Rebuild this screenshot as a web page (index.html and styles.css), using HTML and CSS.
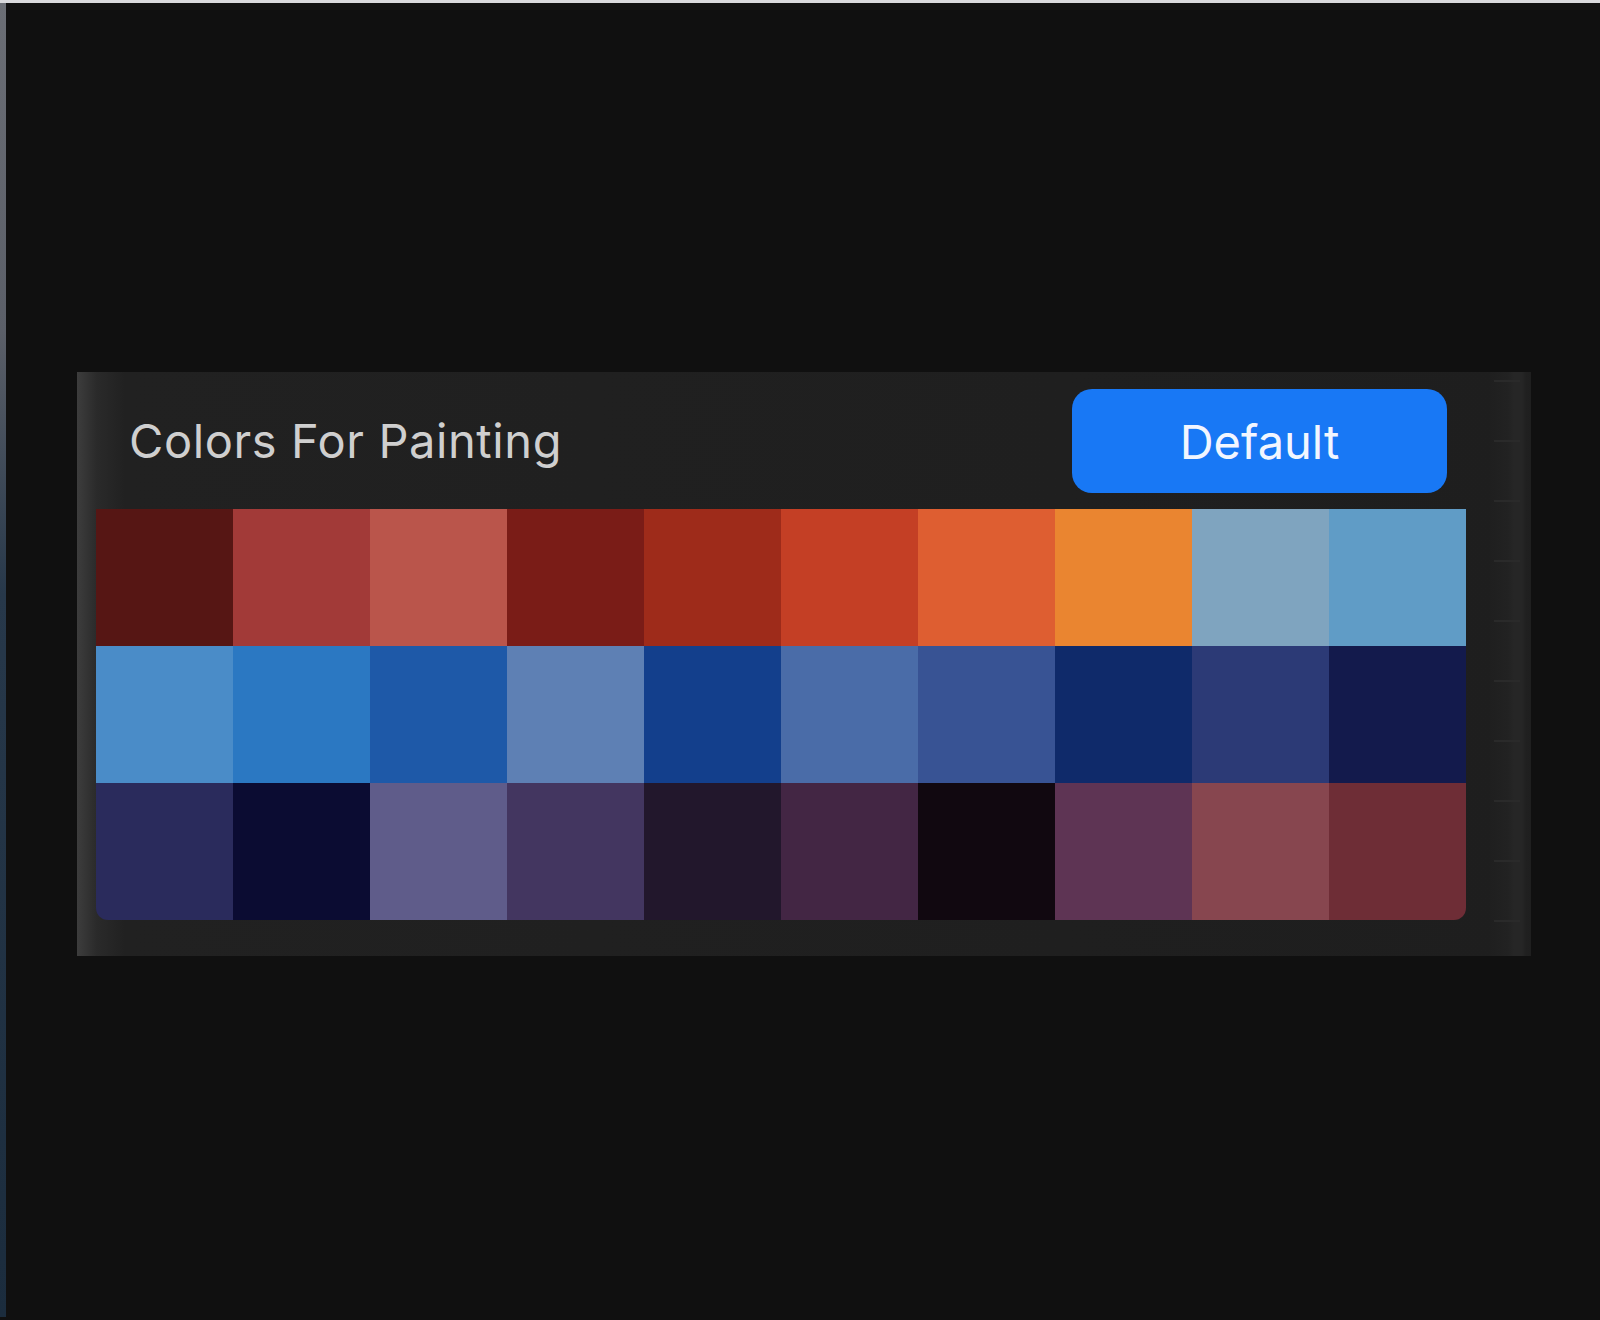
FILE: index.html
```html
<!DOCTYPE html>
<html lang="en">
<head>
  <meta charset="UTF-8" />
  <title>Colors For Painting</title>
  <link rel="stylesheet" href="styles.css">
</head>
<body>
  <div class="screen">
    <div class="edge"></div>
    <main class="stage">
      <section class="palette">
        <div class="palette-main">
          <div class="palette-head">
            <h2 class="palette-title">Colors For Painting</h2>
            <button class="default-btn">Default</button>
          </div>
          <div class="swatches">
            <div class="swatch" style="background:#561614"></div>
            <div class="swatch" style="background:#a23a38"></div>
            <div class="swatch" style="background:#ba554b"></div>
            <div class="swatch" style="background:#7a1c17"></div>
            <div class="swatch" style="background:#9e2b1a"></div>
            <div class="swatch" style="background:#c43f25"></div>
            <div class="swatch" style="background:#de5e31"></div>
            <div class="swatch" style="background:#ea8530"></div>
            <div class="swatch" style="background:#7fa4bf"></div>
            <div class="swatch" style="background:#609cc6"></div>

            <div class="swatch" style="background:#4a8cc8"></div>
            <div class="swatch" style="background:#2b78c2"></div>
            <div class="swatch" style="background:#1e59a8"></div>
            <div class="swatch" style="background:#5e80b4"></div>
            <div class="swatch" style="background:#133f8c"></div>
            <div class="swatch" style="background:#4a6ca8"></div>
            <div class="swatch" style="background:#385394"></div>
            <div class="swatch" style="background:#0f2a6a"></div>
            <div class="swatch" style="background:#2c3a76"></div>
            <div class="swatch" style="background:#131a4c"></div>

            <div class="swatch" style="background:#2a2b5c"></div>
            <div class="swatch" style="background:#0b0c32"></div>
            <div class="swatch" style="background:#5f5c8a"></div>
            <div class="swatch" style="background:#433660"></div>
            <div class="swatch" style="background:#22172c"></div>
            <div class="swatch" style="background:#432644"></div>
            <div class="swatch" style="background:#110810"></div>
            <div class="swatch" style="background:#5e3454"></div>
            <div class="swatch" style="background:#87464f"></div>
            <div class="swatch" style="background:#6e2d36"></div>
          </div>
        </div>
        <div class="palette-rail"></div>
      </section>
    </main>
  </div>
</body>
</html>
```

FILE: styles.css
```css
* { box-sizing: border-box; margin: 0; padding: 0; }
html, body { height: 100%; }
body {
  background: #101010;
  font-family: Inter, "Noto Sans", sans-serif;
  border-top: 3px solid #d9d9dc;
}
.screen { display: flex; min-height: calc(100% - 3px); }
.edge {
  width: 6px; flex: none;
  background: linear-gradient(180deg, #6b6e75 0%, #5b5f68 25%, #27384a 45%, #1b2c3d 100%);
}
.stage { flex: 1; padding: 369px 0 0 71px; }

.palette {
  display: flex;
  width: 1454px; height: 584px;
  background: linear-gradient(90deg, #3d3d3d 0px, #2a2a2a 20px, #212121 48px, #1e1e1e 100%);
}
.palette-main { flex: 1; padding: 0 24px 0 19px; }
.palette-head {
  height: 137px;
  display: flex; align-items: center; justify-content: space-between;
  padding: 0 19px 0 33px;
}
.palette-title { font-size: 47px; font-weight: 400; color: #cfcfcf; letter-spacing: 0.6px; }
.default-btn {
  width: 375px; height: 104px;
  background: #1878f5; color: #f2f6ff;
  border: none; border-radius: 20px;
  font-family: inherit; font-size: 47px; font-weight: 400;
  margin-top: 1px;
}
.swatches {
  display: grid;
  grid-template-columns: repeat(10, 137px);
  grid-auto-rows: 137px;
  border-radius: 0 0 12px 12px;
  overflow: hidden;
  width: 1370px;
}
.palette-rail {
  width: 41px; flex: none;
  background:
    repeating-linear-gradient(180deg, transparent 0 8px, #2a2a2a 8px 10px, transparent 10px 60px) 4px 0 / 26px 100% no-repeat,
    linear-gradient(90deg, #1f1f1f 0, #222 18px, #262626 24px, #262626 32px, #202020 36px, #1f1f1f 100%);
}
```
